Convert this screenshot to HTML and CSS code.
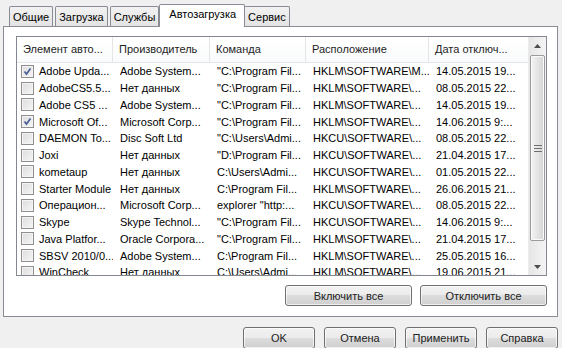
FILE: index.html
```html
<!DOCTYPE html>
<html lang="ru">
<head>
<meta charset="UTF-8">
<title>Конфигурация системы</title>
<link rel="stylesheet" href="styles.css">
</head>
<body>

<div class="dialog">
  <div class="tabs">
    <div class="tab">Общие</div>
    <div class="tab">Загрузка</div>
    <div class="tab">Службы</div>
    <div class="tab tab-active">Автозагрузка</div>
    <div class="tab">Сервис</div>
  </div>

  <div class="panel">
    <div class="list">
      <div class="list-main">
        <div class="list-head">
          <div class="col">Элемент авто...</div>
          <div class="col">Производитель</div>
          <div class="col">Команда</div>
          <div class="col">Расположение</div>
          <div class="col">Дата отключ...</div>
        </div>

        <div class="row">
          <div class="cell cell-name"><span class="check checked"><svg viewBox="0 0 13 13"><path d="M3.5 6.5 L5.5 9 L9.5 3.5" /></svg></span>Adobe Upda...</div>
          <div class="cell">Adobe System...</div>
          <div class="cell">"C:\Program Fil...</div>
          <div class="cell">HKLM\SOFTWARE\M...</div>
          <div class="cell">14.05.2015 19...</div>
        </div>
        <div class="row">
          <div class="cell cell-name"><span class="check"></span>AdobeCS5.5...</div>
          <div class="cell">Нет данных</div>
          <div class="cell">"C:\Program Fil...</div>
          <div class="cell">HKLM\SOFTWARE\...</div>
          <div class="cell">08.05.2015 22...</div>
        </div>
        <div class="row">
          <div class="cell cell-name"><span class="check"></span>Adobe CS5 ...</div>
          <div class="cell">Adobe System...</div>
          <div class="cell">"C:\Program Fil...</div>
          <div class="cell">HKLM\SOFTWARE\...</div>
          <div class="cell">14.05.2015 19...</div>
        </div>
        <div class="row">
          <div class="cell cell-name"><span class="check checked"><svg viewBox="0 0 13 13"><path d="M3.5 6.5 L5.5 9 L9.5 3.5" /></svg></span>Microsoft Of...</div>
          <div class="cell">Microsoft Corp...</div>
          <div class="cell">"C:\Program Fil...</div>
          <div class="cell">HKLM\SOFTWARE\...</div>
          <div class="cell">14.06.2015 9:...</div>
        </div>
        <div class="row">
          <div class="cell cell-name"><span class="check"></span>DAEMON To...</div>
          <div class="cell">Disc Soft Ltd</div>
          <div class="cell">"C:\Users\Admi...</div>
          <div class="cell">HKCU\SOFTWARE\...</div>
          <div class="cell">08.05.2015 22...</div>
        </div>
        <div class="row">
          <div class="cell cell-name"><span class="check"></span>Joxi</div>
          <div class="cell">Нет данных</div>
          <div class="cell">"D:\Program Fil...</div>
          <div class="cell">HKCU\SOFTWARE\...</div>
          <div class="cell">21.04.2015 17...</div>
        </div>
        <div class="row">
          <div class="cell cell-name"><span class="check"></span>kometaup</div>
          <div class="cell">Нет данных</div>
          <div class="cell">C:\Users\Admi...</div>
          <div class="cell">HKCU\SOFTWARE\...</div>
          <div class="cell">01.05.2015 22...</div>
        </div>
        <div class="row">
          <div class="cell cell-name"><span class="check"></span>Starter Module</div>
          <div class="cell">Нет данных</div>
          <div class="cell">C:\Program Fil...</div>
          <div class="cell">HKLM\SOFTWARE\...</div>
          <div class="cell">26.06.2015 21...</div>
        </div>
        <div class="row">
          <div class="cell cell-name"><span class="check"></span>Операцион...</div>
          <div class="cell">Microsoft Corp...</div>
          <div class="cell">explorer "http:...</div>
          <div class="cell">HKCU\SOFTWARE\...</div>
          <div class="cell">08.05.2015 22...</div>
        </div>
        <div class="row">
          <div class="cell cell-name"><span class="check"></span>Skype</div>
          <div class="cell">Skype Technol...</div>
          <div class="cell">"C:\Program Fil...</div>
          <div class="cell">HKCU\SOFTWARE\...</div>
          <div class="cell">14.06.2015 9:...</div>
        </div>
        <div class="row">
          <div class="cell cell-name"><span class="check"></span>Java Platfor...</div>
          <div class="cell">Oracle Corpora...</div>
          <div class="cell">"C:\Program Fil...</div>
          <div class="cell">HKLM\SOFTWARE\...</div>
          <div class="cell">21.04.2015 17...</div>
        </div>
        <div class="row">
          <div class="cell cell-name"><span class="check"></span>SBSV 2010/0...</div>
          <div class="cell">Adobe System...</div>
          <div class="cell">C:\Program Fil...</div>
          <div class="cell">HKLM\SOFTWARE\...</div>
          <div class="cell">25.05.2015 16...</div>
        </div>
        <div class="row">
          <div class="cell cell-name"><span class="check"></span>WinCheck</div>
          <div class="cell">Нет данных</div>
          <div class="cell">C:\Users\Admi...</div>
          <div class="cell">HKLM\SOFTWARE\...</div>
          <div class="cell">19.06.2015 21...</div>
        </div>
      </div>

      <div class="scrollbar">
        <div class="sb-btn"><svg viewBox="0 0 7 4"><path d="M0 4 L3.5 0 L7 4 Z" /></svg></div>
        <div class="sb-track">
          <div class="sb-thumb">
            <svg class="sb-grip" viewBox="0 0 8 7"><path d="M0 0.5 H8 M0 3.5 H8 M0 6.5 H8" /></svg>
          </div>
        </div>
        <div class="sb-btn"><svg viewBox="0 0 7 4"><path d="M0 0 L7 0 L3.5 4 Z" /></svg></div>
      </div>
    </div>

    <div class="panel-actions">
      <button class="btn btn-wide">Включить все</button>
      <button class="btn btn-wide">Отключить все</button>
    </div>
  </div>

  <div class="dialog-actions">
    <button class="btn">OK</button>
    <button class="btn">Отмена</button>
    <button class="btn">Применить</button>
    <button class="btn">Справка</button>
  </div>
</div>

</body>
</html>
```

FILE: styles.css
```css
body {
  margin: 0;
  padding: 0;
  background-color: #f0f0f0;
  font-family: 'Liberation Sans', Arial, sans-serif;
  font-size: 11px;
  color: #000;
  overflow: hidden;
}

.dialog {
  width: 562px;
  height: 348px;
}

/* tab strip */
.tabs {
  display: flex;
  align-items: flex-end;
  height: 26px;
  padding-left: 9px;
}

.tab {
  height: 19px;
  line-height: 20px;
  padding: 0 3px;
  margin-right: 2px;
  border: 1px solid #898c95;
  border-bottom: none;
  border-radius: 2px 2px 0 0;
  background: linear-gradient(#f2f2f2, #e3e3e3);
}

.tab-active {
  position: relative;
  z-index: 1;
  height: 22px;
  line-height: 19px;
  margin: 0 -1px -1px -2px;
  padding: 0 8px 0 9px;
  background: #fff;
}

/* tab page */
.panel {
  margin: 0 4px 0 3px;
  height: 276px;
  padding: 9px 10px 4px 12px;
  border: 1px solid #898c95;
  background: #fff;
}

.list {
  display: flex;
  height: 238px;
  border: 1px solid #828790;
  overflow: hidden;
}

.list-main {
  flex: 1;
  overflow: hidden;
}

.list-head,
.row {
  display: grid;
  grid-template-columns: 96px 97px 96px 123px 1fr;
}

.list-head {
  height: 25px;
  border-bottom: 1px solid #e5e5e5;
  background: linear-gradient(#ffffff, #fafbfc);
}

.col {
  line-height: 25px;
  padding-left: 6px;
  border-right: 1px solid #e5e5e5;
  white-space: nowrap;
  color: #1e1e1e;
}

.col:last-child {
  border-right: none;
}

.row {
  height: 16.75px;
}

.cell {
  display: flex;
  align-items: center;
  padding-left: 7px;
  white-space: nowrap;
  overflow: hidden;
}

.cell-name {
  padding-left: 4px;
}

.check {
  flex: none;
  width: 11px;
  height: 11px;
  margin-right: 5px;
  border: 1px solid #8f8f8f;
  background: linear-gradient(135deg, #dcdcdc, #f6f6f6);
  box-shadow: inset 0 0 0 1px #f4f4f4;
  position: relative;
}

.check svg {
  position: absolute;
  left: -1px;
  top: -1px;
  width: 13px;
  height: 13px;
  fill: none;
  stroke: #4a5f97;
  stroke-width: 1.7;
}

/* scrollbar */
.scrollbar {
  width: 17px;
  display: flex;
  flex-direction: column;
  background: linear-gradient(90deg, #e6e6e6, #f4f4f4);
  border-left: 1px solid #ececec;
}

.sb-btn {
  height: 17px;
  display: flex;
  align-items: center;
  justify-content: center;
}

.sb-btn svg {
  width: 7px;
  height: 4px;
  fill: #4d4d4d;
}

.sb-track {
  flex: 1;
  padding: 1px 1px 3px 1px;
}

.sb-thumb {
  height: 184px;
  border: 1px solid #9a9a9a;
  border-radius: 2px;
  background: linear-gradient(90deg, #f4f4f4, #e2e2e2 60%, #d4d4d4);
  box-shadow: inset 0 0 0 1px #fbfbfb;
  display: flex;
  align-items: center;
  justify-content: center;
}

.sb-grip {
  width: 8px;
  height: 7px;
  fill: none;
  stroke: #6f6f6f;
  stroke-width: 1;
}

/* buttons */
.btn {
  font-family: inherit;
  font-size: 11px;
  font-weight: normal;
  color: #222;
  height: 22px;
  width: 72px;
  padding: 0;
  border: 1px solid #707070;
  border-radius: 3px;
  background: linear-gradient(#f2f2f2 0%, #ebebeb 50%, #dddddd 50%, #cfcfcf 100%);
  box-shadow: inset 0 0 0 1px rgba(255, 255, 255, 0.7);
}

.btn-wide {
  width: 127px;
  height: 21px;
}

.panel-actions {
  display: flex;
  justify-content: flex-end;
  gap: 8px;
  margin-top: 9px;
}

.dialog-actions {
  display: flex;
  justify-content: flex-end;
  gap: 9px;
  margin-top: 10px;
  padding-right: 4px;
}
```
